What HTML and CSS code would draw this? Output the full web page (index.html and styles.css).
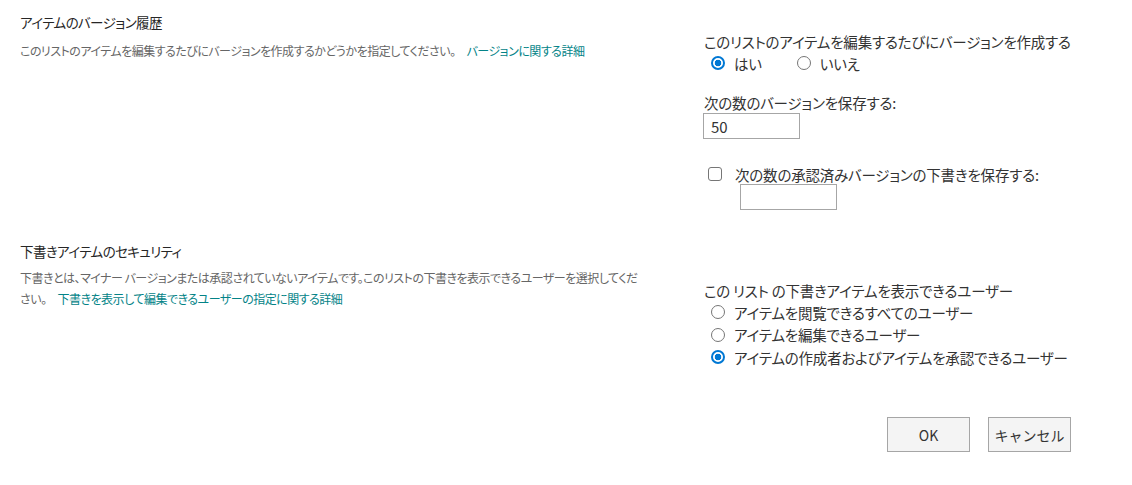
FILE: index.html
```html
<!DOCTYPE html>
<html lang="ja">
<head>
    <meta charset="UTF-8">
    <meta name="viewport" content="width=device-width, initial-scale=1.0">
    <title>バージョン設定</title>
    <link rel="stylesheet" href="styles.css">
</head>
<body>
    <form class="settings">
        <section class="row first">
            <div class="info">
                <h2>アイテムのバージョン履歴</h2>
                <p>このリストのアイテムを編集するたびにバージョンを作成するかどうかを指定してください。<a href="#">バージョンに関する詳細</a></p>
            </div>
            <div class="fields">
                <div class="label">このリストのアイテムを編集するたびにバージョンを作成する</div>
                <div class="choices">
                    <label class="choice"><input type="radio" name="versioning" checked>はい</label>
                    <label class="choice"><input type="radio" name="versioning">いいえ</label>
                </div>
                <div class="label count-label">次の数のバージョンを保存する:</div>
                <input type="text" class="count" value="50">
                <label class="check"><input type="checkbox">次の数の承認済みバージョンの下書きを保存する:</label>
                <input type="text" class="count draft-count">
            </div>
        </section>

        <section class="row second">
            <div class="info">
                <h2>下書きアイテムのセキュリティ</h2>
                <p class="wrap">下書きとは、マイナー バージョンまたは承認されていないアイテムです。このリストの下書きを表示できるユーザーを選択してください。<a href="#">下書きを表示して編集できるユーザーの指定に関する詳細</a></p>
            </div>
            <div class="fields">
                <div class="label">この リスト の下書きアイテムを表示できるユーザー</div>
                <label class="option"><input type="radio" name="draft">アイテムを閲覧できるすべてのユーザー</label>
                <label class="option"><input type="radio" name="draft">アイテムを編集できるユーザー</label>
                <label class="option"><input type="radio" name="draft" checked>アイテムの作成者およびアイテムを承認できるユーザー</label>
            </div>
        </section>

        <div class="actions">
            <button type="button">OK</button>
            <button type="button">キャンセル</button>
        </div>
    </form>
</body>
</html>
```

FILE: styles.css
```css
body {
    margin: 0;
    background-color: #ffffff;
    color: #333333;
    font-family: "Noto Sans CJK JP", "Noto Sans", sans-serif;
    font-feature-settings: "palt";
}
.row {
    display: grid;
    grid-template-columns: 684px 1fr;
    padding-left: 20px;
}
.row.first {
    height: 229px;
}
.row.second {
    height: 139px;
}
.info {
    padding-top: 12px;
}
.info h2 {
    margin: 0;
    font-size: 13.5px;
    font-weight: normal;
    line-height: 20px;
    letter-spacing: -0.6px;
    color: #262626;
}
.info p {
    margin: 8px 0 0;
    font-size: 12px;
    line-height: 21px;
    letter-spacing: -0.5px;
    color: #666666;
}
.info p.wrap {
    margin-top: 6px;
    width: 626px;
}
.info a {
    color: #038387;
    text-decoration: none;
    margin-left: 11px;
}
.fields {
    padding-top: 32px;
    font-size: 14.5px;
    letter-spacing: -0.2px;
}
.second .fields {
    padding-top: 52px;
}
.label {
    line-height: 20px;
}
.choices {
    display: flex;
    height: 22px;
    align-items: center;
}
.choice, .option, .check {
    display: flex;
    align-items: center;
}
.choice + .choice {
    margin-left: 28px;
}
.option {
    height: 22.5px;
}
input[type="radio"] {
    appearance: none;
    box-sizing: border-box;
    width: 14px;
    height: 14px;
    margin: 0 9px 0 7px;
    border: 1.5px solid #767676;
    border-radius: 50%;
    background-color: #ffffff;
}
input[type="radio"]:checked {
    border: 2px solid #0078d4;
    background: radial-gradient(circle, #0078d4 3px, #ffffff 3.6px);
}
.count-label {
    margin-top: 19px;
}
.count {
    display: block;
    box-sizing: border-box;
    width: 97px;
    height: 26px;
    margin: 0 0 0 -1px;
    padding: 0 7px;
    border: 1px solid #a6a6a6;
    font-family: inherit;
    font-size: 15px;
    color: #333333;
}
.check {
    height: 20px;
    margin-top: 25px;
}
input[type="checkbox"] {
    appearance: none;
    box-sizing: border-box;
    width: 14px;
    height: 14px;
    margin: 0 13px 0 4px;
    border: 1.5px solid #767676;
    border-radius: 3px;
    background-color: #ffffff;
}
.draft-count {
    margin-left: 36px;
}
.actions {
    display: flex;
    justify-content: flex-end;
    gap: 18px;
    margin-top: 49px;
    padding-right: 61px;
}
.actions button {
    width: 83px;
    height: 35px;
    padding: 0;
    white-space: nowrap;
    background-color: #f4f4f4;
    border: 1px solid #a6a6a6;
    font-family: inherit;
    font-size: 14px;
    color: #333333;
}
```
